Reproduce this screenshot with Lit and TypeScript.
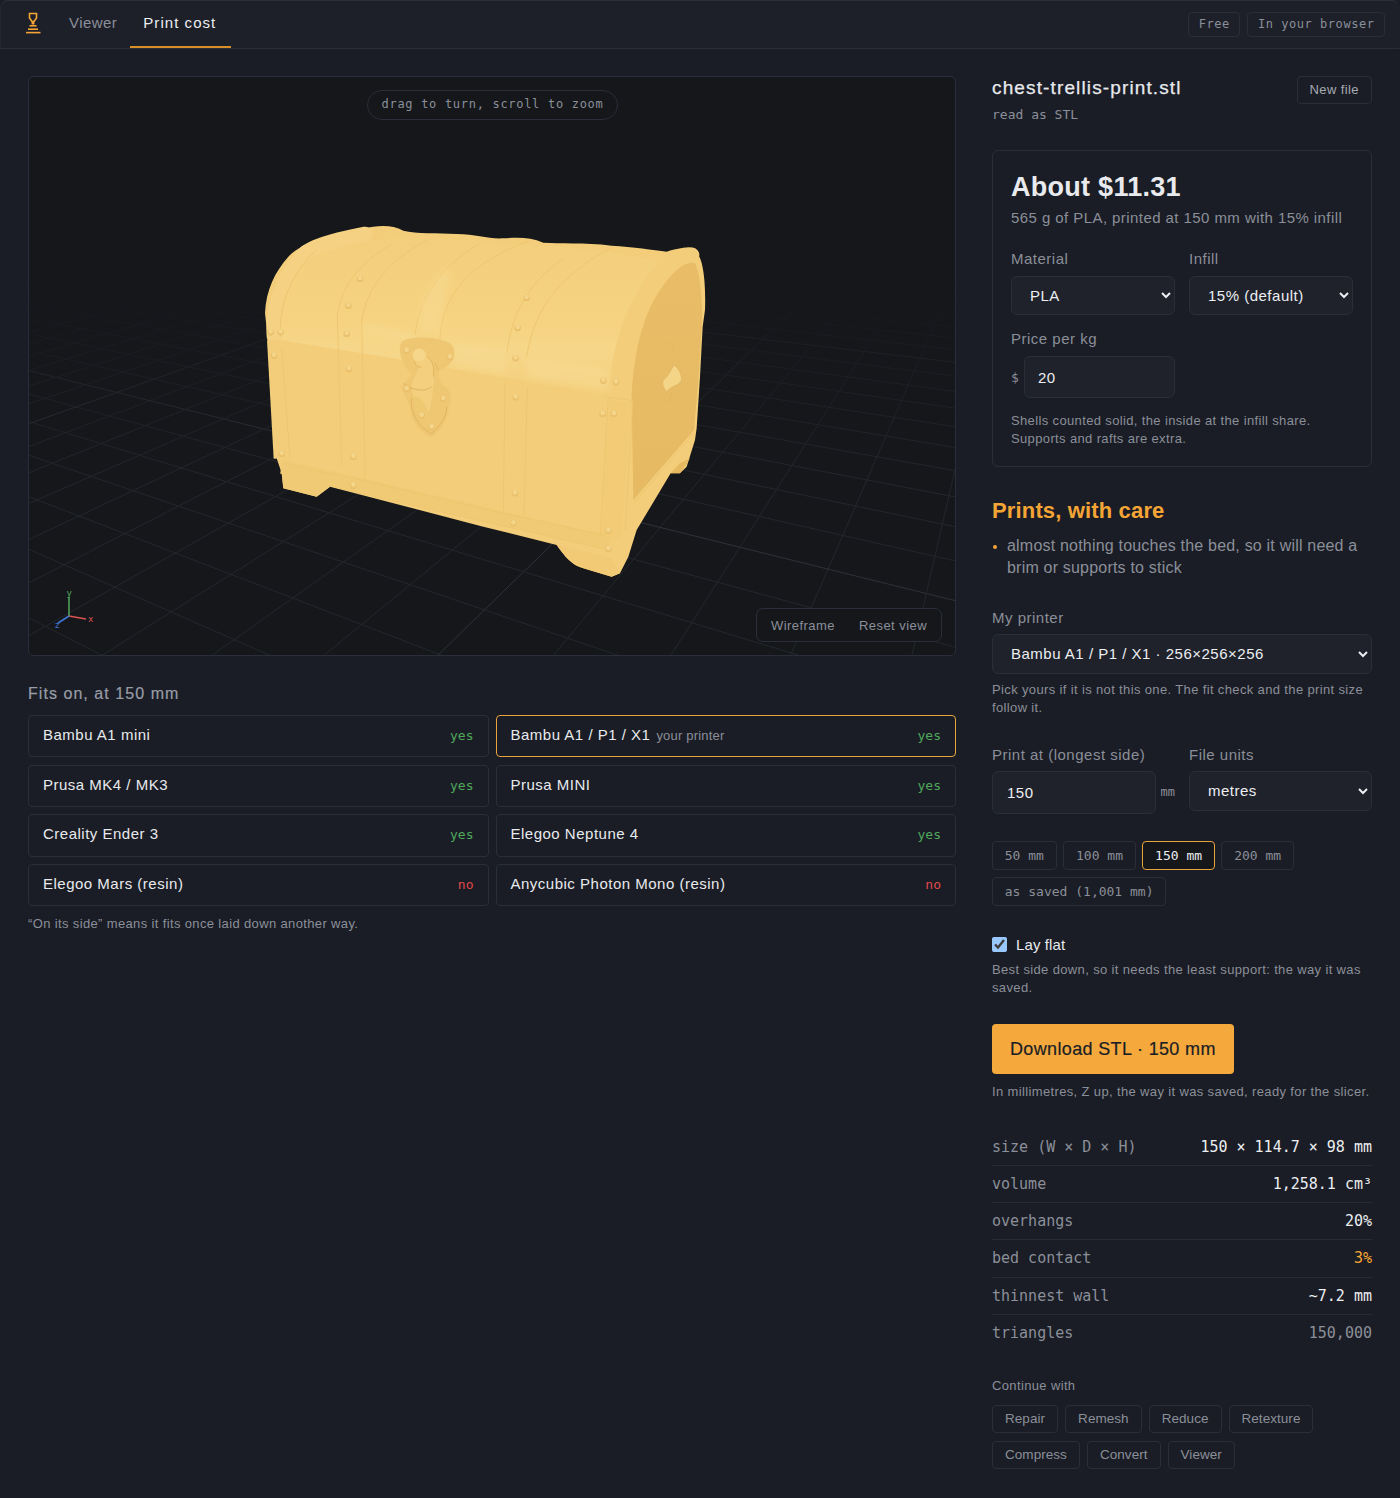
import { LitElement, html, css, svg } from "lit";
import { customElement } from "lit/decorators.js";

const VA = [-900, 140];
const VB = [1050, 60];
const P0 = [79, 516];
const A = 0.0589;
const B = 0.0448;

function project(u: number, v: number) {
  const w = 1 + A * u + B * v;
  return [
    (A * u * VB[0] + B * v * VA[0] + P0[0]) / w - 28,
    (A * u * VB[1] + B * v * VA[1] + P0[1]) / w - 76,
    w,
  ];
}

function gridLines() {
  const out: unknown[] = [];
  const N = 24;
  for (let i = -30; i <= N; i++) {
    const major = ((i % 10) + 10) % 10 === 4;
    for (const axis of [0, 1]) {
      const pts: string[] = [];
      for (let t = -40; t <= N; t += 1) {
        const p = axis === 0 ? project(i, t) : project(t, i);
        if (p[2] > 0.12) pts.push(`${p[0].toFixed(1)},${p[1].toFixed(1)}`);
      }
      if (pts.length < 2) continue;
      out.push(
        svg`<polyline points=${pts.join(" ")} fill="none" stroke=${major ? "#2f3238" : "#24272d"} stroke-width="1"></polyline>`
      );
    }
  }
  return out;
}

const rivets = [
  [330, 205], [295, 285], [290, 370], [297, 475], [310, 738], [310, 825],
  [830, 262], [803, 352], [797, 443], [797, 560], [795, 848],
  [72, 435], [95, 730], [1098, 515], [1092, 610], [1075, 960], [1075, 1015],
  [62, 365], [92, 365], [790, 938], [1058, 610], [1060, 510],
];

const lockRivets = [[470, 420], [600, 440], [580, 565], [515, 615], [470, 535], [545, 650]];

function chest() {
  return svg`<svg class="chest" viewBox="0 0 1410 1140" aria-hidden="true">
    <defs>
      <linearGradient id="lid" x1="0" y1="0" x2="0" y2="1">
        <stop offset="0" stop-color="#f3cf7d"></stop>
        <stop offset="0.55" stop-color="#f5d381"></stop>
        <stop offset="0.72" stop-color="#f6d78a"></stop>
        <stop offset="1" stop-color="#f3cd79"></stop>
      </linearGradient>
      <linearGradient id="side" x1="0" y1="0" x2="0" y2="1">
        <stop offset="0" stop-color="#e9bd67"></stop>
        <stop offset="1" stop-color="#e6b963"></stop>
      </linearGradient>
      <filter id="soft" x="-10%" y="-10%" width="120%" height="120%"><feGaussianBlur stdDeviation="1.4"></feGaussianBlur></filter>
      <filter id="softer" x="-20%" y="-20%" width="140%" height="140%"><feGaussianBlur stdDeviation="9"></feGaussianBlur></filter>
    </defs>
    <path fill="#f3cd79" d="M45 310 C48 240 75 185 115 140 C160 95 245 72 340 55 C380 47 425 42 460 62 C500 72 560 68 620 72 C680 72 715 88 760 85 C800 83 840 80 880 98 C930 102 1000 96 1085 107 C1150 110 1210 120 1250 125 C1285 115 1320 105 1345 135 C1365 165 1367 250 1365 300 L1358 350 L1350 500 L1340 655 L1335 690 L1310 770 L1290 790 L1262 790 L1160 960 L1135 1040 L1110 1090 L1085 1100 L1000 1075 C965 1065 945 1040 920 1005 L700 950 L240 830 L200 860 L100 835 L95 790 L80 745 L55 400 Z"></path>
    <path fill="url(#side)" d="M1145 560 C1150 440 1175 320 1230 240 C1270 180 1310 150 1335 160 C1352 190 1358 280 1356 340 L1346 500 L1332 660 L1150 870 Z"></path>
    <path fill="url(#lid)" d="M90 390 C85 300 115 190 200 120 C300 90 420 80 520 85 C700 90 900 105 1060 125 C1130 135 1200 145 1230 155 C1150 240 1090 400 1075 555 C800 510 350 430 90 390 Z"></path>
    <g fill="none" stroke-linecap="round" stroke-linejoin="round">
      <path stroke="#f4d183" stroke-width="44" d="M72 380 C65 290 100 190 170 125 C210 100 280 85 345 72"></path>
      <path stroke="#f3cd7a" stroke-width="46" d="M1100 555 C1105 430 1140 310 1215 205 C1250 160 1290 130 1325 135"></path>
      <path stroke="#f3cb76" stroke-width="62" stroke-linecap="butt" d="M1112 575 L1082 985"></path>
      <path stroke="#f1ca75" stroke-width="42" stroke-linecap="butt" d="M95 770 L1080 1000"></path>
      <path stroke="#f3cd79" stroke-width="38" stroke-linecap="butt" d="M70 390 L90 745"></path>
    </g>
    <g fill="none" stroke="#eec670" stroke-width="3" filter="url(#soft)">
      <path d="M95 410 L120 750"></path>
      <path d="M120 765 L330 810 L760 910 L1060 975"></path>
      <path d="M100 795 L420 870 L1055 1015"></path>
      <path d="M1148 575 L1125 960"></path>
      <path d="M1075 565 L1050 985"></path>
      <path d="M1150 880 L1335 665"></path>
      <path d="M1060 560 L1148 572"></path>
      <path d="M92 380 C85 300 115 195 200 120"></path>
      <path d="M262 320 L275 770 M335 335 L345 790 C343 800 345 805 345 810"></path>
      <path d="M262 320 C270 240 320 160 430 100 M335 335 C345 250 400 160 530 90"></path>
      <path d="M495 375 C505 290 550 180 690 100 M570 385 C575 290 620 170 840 92"></path>
      <path d="M765 515 L760 905 M832 530 L822 915"></path>
      <path d="M770 430 C785 320 830 220 940 145 M830 440 C850 320 900 215 1080 115"></path>
    </g>
    <g fill="#f7da92" opacity="0.6" filter="url(#softer)">
      <path d="M340 340 C420 350 450 365 495 372 L500 400 C450 395 400 385 340 375 Z"></path>
      <path d="M620 400 L770 425 L765 490 C700 480 640 470 610 460 Z"></path>
      <path d="M830 440 C930 455 1020 460 1075 480 L1075 545 C1000 530 900 515 830 505 Z"></path>
      <path d="M510 290 C530 250 560 190 600 175 C590 260 575 300 570 370 L505 360 Z"></path>
    </g>
    <path fill="#efc773" d="M455 395 C480 378 560 378 600 400 C625 420 615 465 570 480 C560 490 570 520 580 528 C605 540 612 570 595 590 C600 620 575 660 545 682 C510 670 490 640 482 610 C485 585 462 560 455 535 C460 520 475 505 485 495 C455 460 440 420 455 395 Z"></path>
    <path fill="#f3cf7e" d="M490 430 C495 410 525 410 530 435 C535 445 548 450 550 470 L552 515 C545 560 548 590 530 612 C510 600 485 570 485 525 C490 500 505 490 505 470 C495 465 488 445 490 430 Z"></path>
    <circle cx="507" cy="435" r="19" fill="#f5d68a"></circle>
    <path fill="#efc872" d="M490 560 C520 555 535 600 540 630 C530 635 510 625 495 605 Z"></path>
    <path fill="none" stroke="#dcae5c" stroke-width="2.5" d="M460 520 C490 545 530 545 545 530 M485 565 C480 600 500 650 545 670 C570 650 590 620 590 590 M555 460 L565 480 M530 440 C545 450 555 465 550 500 M492 452 C497 470 510 475 515 470"></path>
    <g>
      ${[...rivets, ...lockRivets].map(
        ([x, y]) => svg`<circle cx=${x} cy=${y + 2} r="10" fill="#eac06c"></circle><circle cx=${x} cy=${y - 1} r="7" fill="#f5d58a"></circle>`
      )}
    </g>
    <path fill="#f4d587" stroke="#deb05d" stroke-width="2" d="M1240 510 C1255 500 1262 480 1272 465 C1285 475 1295 490 1295 510 C1285 530 1265 525 1250 545 C1240 535 1235 520 1240 510 Z"></path>
    <path fill="none" stroke="#dcb05e" stroke-width="2" stroke-opacity="0.6" d="M1255 400 C1270 390 1278 410 1265 430 M1240 560 C1250 590 1260 580 1265 545"></path>
    <path fill="#f1ca76" d="M95 790 L240 830 L200 860 L100 835 Z"></path>
    <path fill="#f2ca75" d="M920 1005 L1085 1045 L1110 1090 L1085 1100 L1000 1075 C965 1065 945 1040 920 1005 Z"></path>
    <path fill="#e6b960" d="M1262 790 L1290 790 L1320 745 L1290 760 Z"></path>
  </svg>`;
}

@customElement("app-root")
export class AppRoot extends LitElement {
  static styles = css`
    :host {
      display: block;
      width: 1400px;
      min-height: 1498px;
      background: #1a1d25;
      color: #e8eaed;
      font-family: "Liberation Sans", Arial, sans-serif;
      --line: #2a2e38;
      --muted: #8b8f99;
      --orange: #f5a536;
      --mono: "DejaVu Sans Mono", "Liberation Mono", monospace;
    }
    * { box-sizing: border-box; }
    .top {
      height: 49px;
      display: flex;
      align-items: stretch;
      background: #1d2029;
      border: 1px solid var(--line);
      border-bottom-color: #2a2e38;
      border-right-color: transparent;
      border-left-color: #23262f;
      border-radius: 8px 8px 0 0;
      padding: 0 14px 0 24px;
    }
    .logo { width: 16px; height: 24px; margin-top: 11px; margin-right: 14px; flex: none; }
    .tab {
      padding: 0 13px 5px 14px;
      display: flex;
      align-items: center;
      font-size: 15px;
      letter-spacing: 0.45px;
      color: var(--muted);
      height: 47px;
      margin-bottom: -1px;
    }
    .tab.on { color: #eceef1; border-bottom: 2px solid #d98f28; padding: 0 15px 3px 13px; letter-spacing: 1.05px; }
    .spacer { flex: 1; }
    .tags { display: flex; gap: 7px; align-items: center; }
    .tag {
      font-family: var(--mono);
      font-size: 12px;
      letter-spacing: 0.55px;
      color: var(--muted);
      border: 1px solid var(--line);
      border-radius: 4px;
      height: 25px;
      line-height: 23px;
      padding: 0 9.5px;
    }
    main {
      display: grid;
      grid-template-columns: 928px 380px;
      gap: 36px;
      padding: 27px 28px 28px;
    }
    .view {
      position: relative;
      height: 580px;
      background: #15171b;
      border: 1px solid var(--line);
      border-radius: 6px;
      overflow: hidden;
    }
    .grid {
      position: absolute; left: -1px; top: -1px; width: 928px; height: 580px;
      mask-image: linear-gradient(to bottom, transparent 205px, black 400px);
      -webkit-mask-image: linear-gradient(to bottom, transparent 205px, black 400px);
    }
    .chest { position: absolute; left: 221px; top: 133px; width: 470px; height: 380px; }
    .axes { position: absolute; left: 10px; top: 500px; width: 80px; height: 70px; }
    .axes text { font-family: var(--mono); font-size: 9px; }
    .hint {
      position: absolute;
      top: 13px;
      left: 338px;
      width: 251px;
      height: 30px;
      border: 1px solid var(--line);
      border-radius: 15px;
      background: #15171b;
      font-family: var(--mono);
      font-size: 12px;
      letter-spacing: 0.7px;
      color: var(--muted);
      line-height: 27px;
      text-align: center;
    }
    .tools {
      position: absolute;
      right: 13px;
      bottom: 13px;
      width: 186px;
      height: 34px;
      display: flex;
      justify-content: space-between;
      align-items: center;
      padding: 0 14px;
      background: #15171b;
      border: 1px solid var(--line);
      border-radius: 7px;
      font-size: 13px;
      letter-spacing: 0.45px;
      color: var(--muted);
    }
    h3 { margin: 28px 0 11px; font-size: 16px; line-height: 20px; font-weight: 400; color: #989ca5; letter-spacing: 1.05px; -webkit-text-stroke: 0.2px #989ca5; }
    .fits { display: grid; grid-template-columns: 1fr 1fr; gap: 7.2px 7px; }
    .fit {
      height: 42.4px;
      border: 1px solid var(--line);
      border-radius: 4px;
      display: flex;
      align-items: center;
      justify-content: space-between;
      padding: 0 14px;
      font-size: 15px;
      letter-spacing: 0.5px;
    }
    .fit > span { padding-bottom: 3px; }
    .fit.mine { border-color: #e8a33d; }
    .fit small { font-size: 13px; letter-spacing: 0.2px; color: var(--muted); margin-left: 6px; }
    .fit b { font-family: var(--mono); font-weight: 400; font-size: 13px; letter-spacing: 0; padding-bottom: 1px; }
    .yes { color: #4fa85c; }
    .no { color: #e0484a; }
    .note { font-size: 13px; line-height: 18px; letter-spacing: 0.36px; color: var(--muted); margin: 0; }
    .fits + .note { margin-top: 9px; }

    .head { display: flex; justify-content: space-between; align-items: flex-start; margin-bottom: 26px; }
    .fname { font-size: 19px; line-height: 24px; letter-spacing: 1.13px; font-weight: 400; -webkit-text-stroke: 0.25px #e8eaed; }
    .fmt { font-family: var(--mono); font-size: 13px; line-height: 18px; color: var(--muted); margin-top: 6px; }
    .btn {
      font-size: 13px;
      letter-spacing: 0.4px;
      color: #a6aab2;
      border: 1px solid var(--line);
      border-radius: 4px;
      height: 28px;
      line-height: 26px;
      padding: 0 12px;
    }
    .card { border: 1px solid var(--line); border-radius: 6px; padding: 18px; }
    .price { font-size: 27px; line-height: 36px; font-weight: 700; letter-spacing: 0.27px; }
    .sub { font-size: 15px; line-height: 22px; letter-spacing: 0.43px; color: var(--muted); margin-top: 2px; }
    .two { display: grid; grid-template-columns: 1fr 1fr; gap: 14px; }
    .lab { display: block; font-size: 15px; line-height: 20px; letter-spacing: 0.5px; color: var(--muted); }
    .card .two { margin-top: 20px; }
    .card .two.mt14 { margin-top: 14px; }
    select, input[type="text"] {
      color-scheme: dark;
      display: block;
      width: 100%;
      background: #1f222b;
      color: #eceef1;
      border: 1px solid var(--line);
      border-radius: 6px;
      font: 400 15px "Liberation Sans", Arial, sans-serif;
      letter-spacing: 0.5px;
      outline: none;
      margin-top: 6px;
    }
    select { height: 40px; padding: 0 14px; }
    input[type="text"] { height: 42px; padding: 0 13px; }
    .card select { height: 39px; margin-top: 7px; }
    .money { display: flex; align-items: center; gap: 4px; margin-top: 7px; }
    .money span { font-family: var(--mono); font-size: 13px; color: var(--muted); width: 9px; }
    .money input { margin-top: 0; flex: 1; }
    .card .note { margin-top: 14px; }
    h2 { margin: 30px 0 0; font-size: 22px; line-height: 28px; font-weight: 700; color: var(--orange); letter-spacing: 0.15px; }
    ul { list-style: none; padding: 0 0 0 15px; margin: 10px 0 0; position: relative; font-size: 16px; line-height: 22.4px; color: var(--muted); letter-spacing: 0.2px; }
    ul::before { content: ""; position: absolute; left: 1px; top: 10px; width: 4px; height: 4px; border-radius: 50%; background: var(--orange); }
    .mt28 { margin-top: 28px; }
    .block-note { margin-top: 7px; }
    .size { display: flex; align-items: flex-start; gap: 5px; margin-top: 6px; }
    .size input { height: 43px; margin: 0; flex: 1; min-width: 0; }
    input.pad14[type="text"] { padding: 0 14px; }
    .size span { font-family: var(--mono); font-size: 12px; color: var(--muted); line-height: 43px; }
    .chips { display: flex; flex-wrap: wrap; gap: 7px 6.5px; }
    .chip {
      height: 29px;
      line-height: 27px;
      padding: 0 11.8px;
      border: 1px solid var(--line);
      border-radius: 4px;
      font-family: var(--mono);
      font-size: 13px;
      color: var(--muted);
    }
    .chip.on { border-color: #e8a33d; color: #eceef1; background: #15171b; }
    .sizes { margin-top: 27px; }
    .check { display: flex; align-items: center; gap: 9px; margin-top: 29px; height: 20px; font-size: 15px; letter-spacing: 0.1px; color: #e8eaed; }
    .check input { color-scheme: dark; width: 15px; height: 15px; margin: 0; accent-color: #99c8ff; }
    .check + .note { margin-top: 6px; }
    .go {
      display: inline-block;
      margin-top: 27px;
      background: #f5a93d;
      color: #1a1d25;
      border-radius: 4px;
      height: 50px;
      line-height: 50px;
      padding: 0 18px;
      font-size: 18px;
      letter-spacing: 0.35px;
      -webkit-text-stroke: 0.2px #1a1d25;
    }
    .after { margin-top: 9px; }
    .stats { margin-top: 28px; font-family: var(--mono); font-size: 15px; }
    .stat {
      height: 37.2px;
      display: flex;
      justify-content: space-between;
      align-items: center;
      border-bottom: 1px solid #272b34;
      color: var(--muted);
    }
    .stat:last-child { border-bottom: 0; }
    .stat b { font-weight: 400; color: #eceef1; }
    .stat b.warn { color: var(--orange); }
    .stat b.dim { color: var(--muted); }
    .cont { margin-top: 25px; margin-bottom: 10px; }
    .links { display: flex; flex-wrap: wrap; gap: 7.5px 7px; }
    .link {
      height: 28.5px;
      line-height: 26.5px;
      padding: 0 12px;
      border: 1px solid var(--line);
      border-radius: 4px;
      font-size: 13.5px;
      letter-spacing: 0.05px;
      color: var(--muted);
    }
  `;

  render() {
    const printers = [
      ["Bambu A1 mini", "", "yes", false],
      ["Bambu A1 / P1 / X1", "your printer", "yes", true],
      ["Prusa MK4 / MK3", "", "yes", false],
      ["Prusa MINI", "", "yes", false],
      ["Creality Ender 3", "", "yes", false],
      ["Elegoo Neptune 4", "", "yes", false],
      ["Elegoo Mars (resin)", "", "no", false],
      ["Anycubic Photon Mono (resin)", "", "no", false],
    ] as const;
    const stats: [string, unknown, string][] = [
      ["size (W × D × H)", "150 × 114.7 × 98 mm", ""],
      ["volume", "1,258.1 cm³", ""],
      ["overhangs", "20%", ""],
      ["bed contact", "3%", "warn"],
      ["thinnest wall", "~7.2 mm", ""],
      ["triangles", "150,000", "dim"],
    ];
    return html`
      <header class="top">
        <svg class="logo" viewBox="0 0 16 24" fill="none" aria-hidden="true">
          <path d="M4.5 1.5 H11.5 V6 L9 9.5 H7 L4.5 6 Z" stroke="#f5a536" stroke-width="1.6"></path>
          <rect x="6.6" y="9.5" width="2.8" height="3" fill="#f5a536"></rect>
          <rect x="4.5" y="13" width="7" height="1.6" fill="#f5a536"></rect>
          <rect x="3" y="16.4" width="10" height="1.6" fill="#f5a536"></rect>
          <rect x="1" y="19.8" width="14.5" height="1.6" fill="#f5a536"></rect>
        </svg>
        <div class="tab">Viewer</div>
        <div class="tab on">Print cost</div>
        <div class="spacer"></div>
        <div class="tags">
          <span class="tag">Free</span>
          <span class="tag">In your browser</span>
        </div>
      </header>
      <main>
        <section>
          <div class="view">
            <svg class="grid" viewBox="0 0 928 580" aria-hidden="true">${gridLines()}</svg>
            ${chest()}
            <svg class="axes" viewBox="0 0 80 70" aria-hidden="true">
              <line x1="30" y1="39" x2="30" y2="20" stroke="#4fa85c" stroke-width="1.5"></line>
              <line x1="30" y1="39" x2="47" y2="42" stroke="#d9534f" stroke-width="1.5"></line>
              <line x1="30" y1="39" x2="19" y2="46" stroke="#3f78d8" stroke-width="1.5"></line>
              <text x="27.5" y="19" fill="#4fa85c">y</text>
              <text x="49" y="45" fill="#d9534f">x</text>
              <text x="15.5" y="51" fill="#3f78d8">z</text>
            </svg>
            <div class="hint">drag to turn, scroll to zoom</div>
            <div class="tools"><span>Wireframe</span><span>Reset view</span></div>
          </div>
          <h3>Fits on, at 150 mm</h3>
          <div class="fits">
            ${printers.map(
              ([n, s, r, mine]) => html`<div class="fit ${mine ? "mine" : ""}">
                <span>${n}${s ? html`<small>${s}</small>` : ""}</span>
                <b class=${r}>${r}</b>
              </div>`
            )}
          </div>
          <p class="note">“On its side” means it fits once laid down another way.</p>
        </section>
        <aside>
          <div class="head">
            <div>
              <div class="fname">chest-trellis-print.stl</div>
              <div class="fmt">read as STL</div>
            </div>
            <div class="btn">New file</div>
          </div>
          <div class="card">
            <div class="price">About $11.31</div>
            <div class="sub">565 g of PLA, printed at 150 mm with 15% infill</div>
            <div class="two">
              <label><span class="lab">Material</span><select><option>PLA</option></select></label>
              <label><span class="lab">Infill</span><select><option>15% (default)</option></select></label>
            </div>
            <div class="two mt14">
              <div><span class="lab">Price per kg</span>
                <div class="money"><span>$</span><input type="text" .value=${"20"} /></div>
              </div>
            </div>
            <p class="note">Shells counted solid, the inside at the infill share.<br />Supports and rafts are extra.</p>
          </div>
          <h2>Prints, with care</h2>
          <ul><li>almost nothing touches the bed, so it will need a brim or supports to stick</li></ul>
          <span class="lab mt28">My printer</span>
          <select><option>Bambu A1 / P1 / X1 · 256×256×256</option></select>
          <p class="note block-note">Pick yours if it is not this one. The fit check and the print size follow it.</p>
          <div class="two mt28">
            <div><span class="lab">Print at (longest side)</span>
              <div class="size"><input class="pad14" type="text" .value=${"150"} /><span>mm</span></div>
            </div>
            <div><span class="lab">File units</span><select><option>metres</option></select></div>
          </div>
          <div class="chips sizes">
            <span class="chip">50 mm</span>
            <span class="chip">100 mm</span>
            <span class="chip on">150 mm</span>
            <span class="chip">200 mm</span>
            <span class="chip">as saved (1,001 mm)</span>
          </div>
          <label class="check"><input type="checkbox" checked />Lay flat</label>
          <p class="note">Best side down, so it needs the least support: the way it was saved.</p>
          <div class="go">Download STL · 150 mm</div>
          <p class="note after">In millimetres, Z up, the way it was saved, ready for the slicer.</p>
          <div class="stats">
            ${stats.map(
              ([k, v, c]) => html`<div class="stat"><span>${k}</span><b class=${c}>${v}</b></div>`
            )}
          </div>
          <p class="note cont">Continue with</p>
          <div class="links">
            ${["Repair", "Remesh", "Reduce", "Retexture", "Compress", "Convert", "Viewer"].map(
              (l) => html`<span class="link">${l}</span>`
            )}
          </div>
        </aside>
      </main>
    `;
  }
}
